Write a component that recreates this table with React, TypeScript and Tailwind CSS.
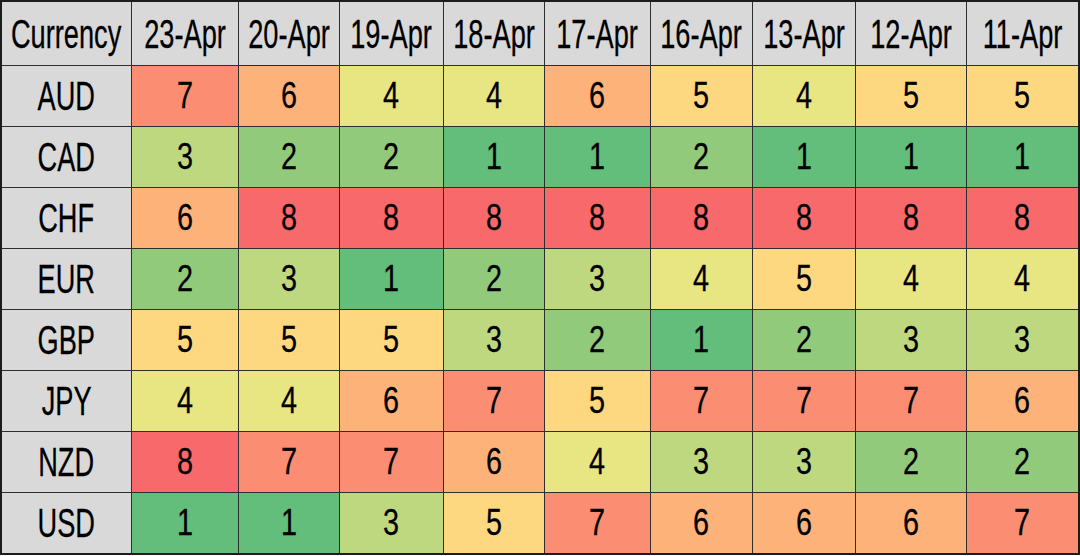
const dates = ['23-Apr', '20-Apr', '19-Apr', '18-Apr', '17-Apr', '16-Apr', '13-Apr', '12-Apr', '11-Apr']

const rows: [string, number[]][] = [
    ['AUD', [7, 6, 4, 4, 6, 5, 4, 5, 5]],
    ['CAD', [3, 2, 2, 1, 1, 2, 1, 1, 1]],
    ['CHF', [6, 8, 8, 8, 8, 8, 8, 8, 8]],
    ['EUR', [2, 3, 1, 2, 3, 4, 5, 4, 4]],
    ['GBP', [5, 5, 5, 3, 2, 1, 2, 3, 3]],
    ['JPY', [4, 4, 6, 7, 5, 7, 7, 7, 6]],
    ['NZD', [8, 7, 7, 6, 4, 3, 3, 2, 2]],
    ['USD', [1, 1, 3, 5, 7, 6, 6, 6, 7]],
]

// colour scale, green (1) -> yellow -> red (8)
const scale: Record<number, string> = {
    1: 'bg-[#63be7b]',
    2: 'bg-[#92ca7c]',
    3: 'bg-[#bed880]',
    4: 'bg-[#e8e583]',
    5: 'bg-[#fed880]',
    6: 'bg-[#fdb27a]',
    7: 'bg-[#fb8d73]',
    8: 'bg-[#f8696b]',
}

const Label: React.FC<{ text: string; size: 'label' | 'num' }> = ({ text, size }) => (
    <span
        className={`inline-block whitespace-nowrap leading-none text-black [-webkit-text-stroke:0.3px_black] ${
            size === 'label' ? 'text-[40px] scale-x-[0.68]' : 'text-[36px] scale-x-[0.8]'
        }`}
        style={{ fontFamily: '"Liberation Sans", Arial, sans-serif' }}
    >
        {text}
    </span>
)

export default function App() {
    return (
        <div className="w-[1080px] h-[556px] bg-white">
            <div className="grid grid-cols-[129px_106px_100px_103px_100px_105px_101px_102px_110px_111px] grid-rows-[63px_repeat(8,60px)] gap-px bg-[#2e2e2e] border-2 border-[#1c1c1c] w-[1080px]">
                <div className="bg-[#d9d9d9] flex items-center justify-center">
                    <Label text="Currency" size="label" />
                </div>
                {dates.map((d) => (
                    <div key={d} className="bg-[#d9d9d9] flex items-center justify-center">
                        <Label text={d} size="label" />
                    </div>
                ))}
                {rows.map(([cur, vals]) => (
                    <div key={cur} className="contents">
                        <div className="bg-[#d9d9d9] flex items-center justify-center">
                            <Label text={cur} size="label" />
                        </div>
                        {vals.map((v, i) => (
                            <div key={i} className={`${scale[v]} flex items-center justify-center`}>
                                <Label text={String(v)} size="num" />
                            </div>
                        ))}
                    </div>
                ))}
            </div>
        </div>
    )
}
